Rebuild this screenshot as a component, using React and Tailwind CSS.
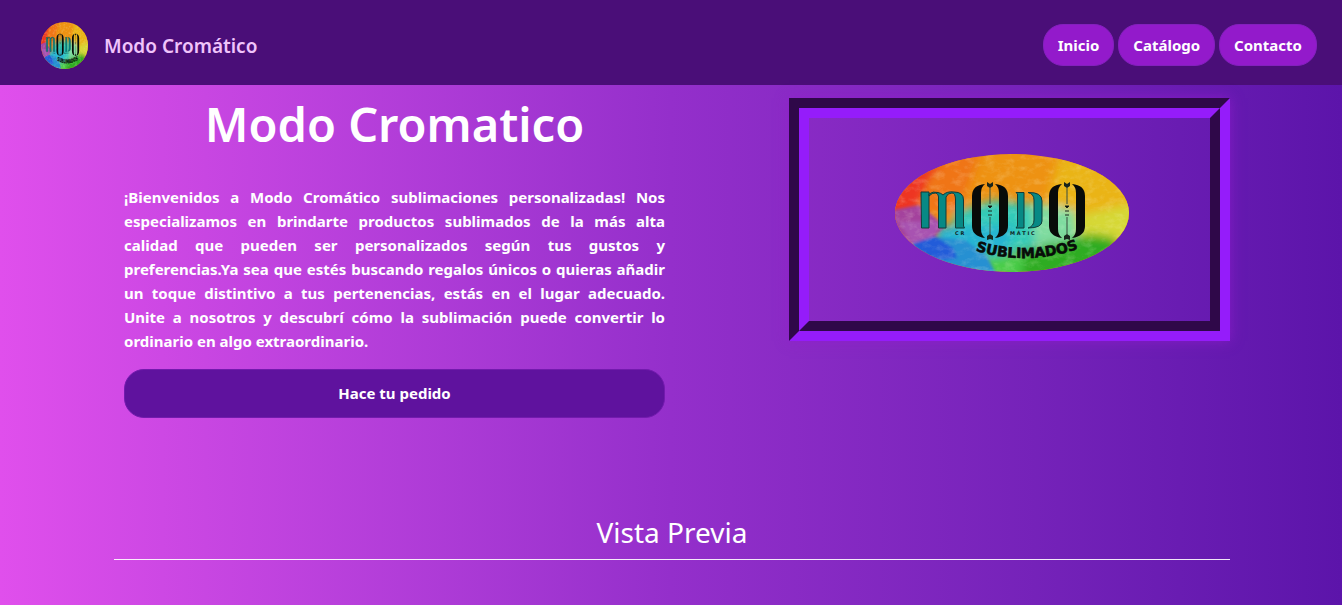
import { useId } from "react";

function Logo({ className, label }) {
  const id = useId().replace(/[^a-zA-Z0-9]/g, "");
  const u = (n) => `${n}${id}`;
  return (
    <svg viewBox="0 0 234 118" preserveAspectRatio="none" className={className} role="img" aria-label={label}>
      <defs>
        <clipPath id={u("c")}><ellipse cx="117" cy="59" rx="117" ry="59" /></clipPath>
        <filter id={u("b")} x="-30%" y="-30%" width="160%" height="160%"><feGaussianBlur stdDeviation="5" /></filter>
        <filter id={u("s")} x="-20%" y="-20%" width="140%" height="140%"><feGaussianBlur stdDeviation="1.5" /></filter>
        <filter id={u("n")} x="0" y="0" width="100%" height="100%">
          <feTurbulence type="fractalNoise" baseFrequency="0.1 0.16" numOctaves="5" seed="4" />
          <feColorMatrix values="0 0 0 0 1  0 0 0 0 1  0 0 0 0 0.8  1.6 0 0 0 -0.72" />
        </filter>
        <path id={u("p")} d="M70 93 Q131 116 194 91" />
      </defs>
      <g clipPath={`url(#${u("c")})`}>
        <rect width="234" height="118" fill="#ee9212" />
        <g filter={`url(#${u("b")})`}>
          <path d="M-10-10H58L34 26 20 66H-10Z" fill="#ee3424" />
          <path d="M50-5 85 0 65 55 25 62 38 25Z" fill="#f07416" />
          <path d="M165 0H245V75L195 62 150 52Z" fill="#eab414" />
          <path d="M60 58 100 46 145 52 155 90 90 105 55 95Z" fill="#30cbb8" />
          <path d="M135 48 180 56 190 84 140 92Z" fill="#7fdca0" />
          <path d="M180 62 245 48V90L185 86Z" fill="#d6d836" />
          <path d="M40 72 120 72 110 100 45 105Z" fill="#28b4d2" />
          <path d="M98 106 155 90 195 80 220 84 225 125H90Z" fill="#2fac22" />
          <path d="M90 104 130 99 125 125H90Z" fill="#48cd48" />
        </g>
        <g filter={`url(#${u("s")})`}>
          <path d="M-2 56 24 51 36 60 50 72 38 84 18 91-4 80Z" fill="#a4439d" />
          <path d="M4 68 48 67 38 82 18 90Z" fill="#a95ab9" opacity=".7" />
          <path d="M17 90 40 83 70 86 92 102 101 120H20Z" fill="#2890d2" />
          <path d="M17 90 40 82 58 94 62 104 35 108Z" fill="#245bd9" />
        </g>
        <rect width="234" height="118" filter={`url(#${u("n")})`} opacity=".28" />
      </g>
      <g fill="#078985" stroke="#123b38" strokeWidth="1">
        <path d="M26 38H34V74H26.500Z" />
        <path d="M43.500 43Q43.500 40 41 39 37 38.500 34 42V40Q38 37 43 38.500 46 39 48 41 52 37 59 38 68.500 38 68.500 46V72L69.500 74H60.500V46Q60.500 39 57 39 52.500 39 51 43V74H43.500Z" />
        <path d="M121 38.500H129V74H121L122.500 72V40Z" />
        <path d="M133 38.500Q147 38 147 47V67Q147 74 133 74 139 72 139 66V46Q139 40 133 38.500Z" />
      </g>
      {[77, 154].map((x) => (
        <g key={x} transform={`translate(${x} 0)`}>
          <path d="M13 30Q0 31 0 42V72Q0 82 13 84 9 81 9 75V39Q9 33 13 30Z M23 30Q36 31 36 42V72Q36 82 23 84 27 81 27 75V39Q27 33 23 30Z" fill="#080b09" />
          <path d="M15 28l3 2 3-2v4l-3 2-3-2ZM15 86v-4l3-2 3 2v4l-3-1Z" fill="#18251c" />
          <path d="M18 33V50M18 63V81" stroke="#374b3d" strokeWidth="1" />
          <path d="M16 52h4l-2 2ZM16 57h4M16 61h4" stroke="#18251c" strokeWidth="1" />
        </g>
      ))}
      <g fill="#10231f" fontFamily="DejaVu Sans, sans-serif" fontWeight="700">
        <text x="60" y="81" fontSize="5">C R</text>
        <text x="115" y="81" fontSize="5">M Á T I C</text>
        <text fontSize="14" fill="#080b09" stroke="#080b09" strokeWidth="0.6"><textPath href={`#${u("p")}`} startOffset="50%" textAnchor="middle">SUBLIMADOS</textPath></text>
      </g>
    </svg>
  );
}

const links = [
  { href: "#inicio", text: "Inicio" },
  { href: "#catalogo", text: "Catálogo" },
  { href: "#contacto", text: "Contacto" },
];

export default function App() {
  return (
    <div className="min-h-screen bg-linear-to-r from-[#e04fec] via-[#942fcb] to-[#5c14aa] font-['Noto_Sans',sans-serif] text-base text-white">
      <header className="flex h-[85px] items-center justify-between bg-[#4a0e78] pr-[25px] pl-[41px]">
        <a href="#inicio" className="flex items-center gap-4 text-[19px] font-semibold text-[#f0c4fb]">
          <Logo className="mt-1.5 size-[47px]" label="Logo" />
          <span className="mt-2">Modo Cromático</span>
        </a>
        <nav className="mt-1 flex gap-1">
          {links.map((l) => (
            <a key={l.href} href={l.href} className="rounded-[20px] border border-[#8420bd] bg-[#931acb] px-3.5 py-2 text-[15px] leading-6 font-bold">
              {l.text}
            </a>
          ))}
        </nav>
      </header>
      <main className="mx-auto max-w-[1118px] pl-0.5">
        <section className="flex justify-between pt-3">
          <div className="w-1/2 pr-[7px] pl-2.5">
            <h1 className="text-center text-[47px] leading-[54px] font-semibold">Modo Cromatico</h1>
            <p className="mt-[34px] text-justify text-[15px] leading-6 font-bold">
              ¡Bienvenidos a Modo Cromático sublimaciones personalizadas! Nos especializamos en brindarte productos sublimados de la más alta calidad que pueden ser personalizados según tus gustos y preferencias.Ya sea que estés buscando regalos únicos o quieras añadir un toque distintivo a tus pertenencias, estás en el lugar adecuado. Unite a nosotros y descubrí cómo la sublimación puede convertir lo ordinario en algo extraordinario.
            </p>
            <button type="button" className="mt-4 h-[49px] w-full rounded-[20px] border border-[#731aae] bg-[#5f129e] text-[15px] font-bold">
              Hace tu pedido
            </button>
          </div>
          <div className="mt-px h-[243px] w-[441px] border-10 border-t-[#2f0849] border-r-[#951cfa] border-b-[#951cfa] border-l-[#2f0849] shadow-[0_0_12px_#951ccfaa]">
            <div className="flex h-full justify-center border-10 border-t-[#951cfa] border-r-[#2f0849] border-b-[#2f0849] border-l-[#951cfa] pt-9 pl-1">
              <Logo className="h-[118px] w-[234px]" label="Modo Cromático Sublimados" />
            </div>
          </div>
        </section>
        <h2 className="mt-24 border-b border-white/90 pb-[9px] text-center text-[28px] leading-9">Vista Previa</h2>
      </main>
    </div>
  );
}
